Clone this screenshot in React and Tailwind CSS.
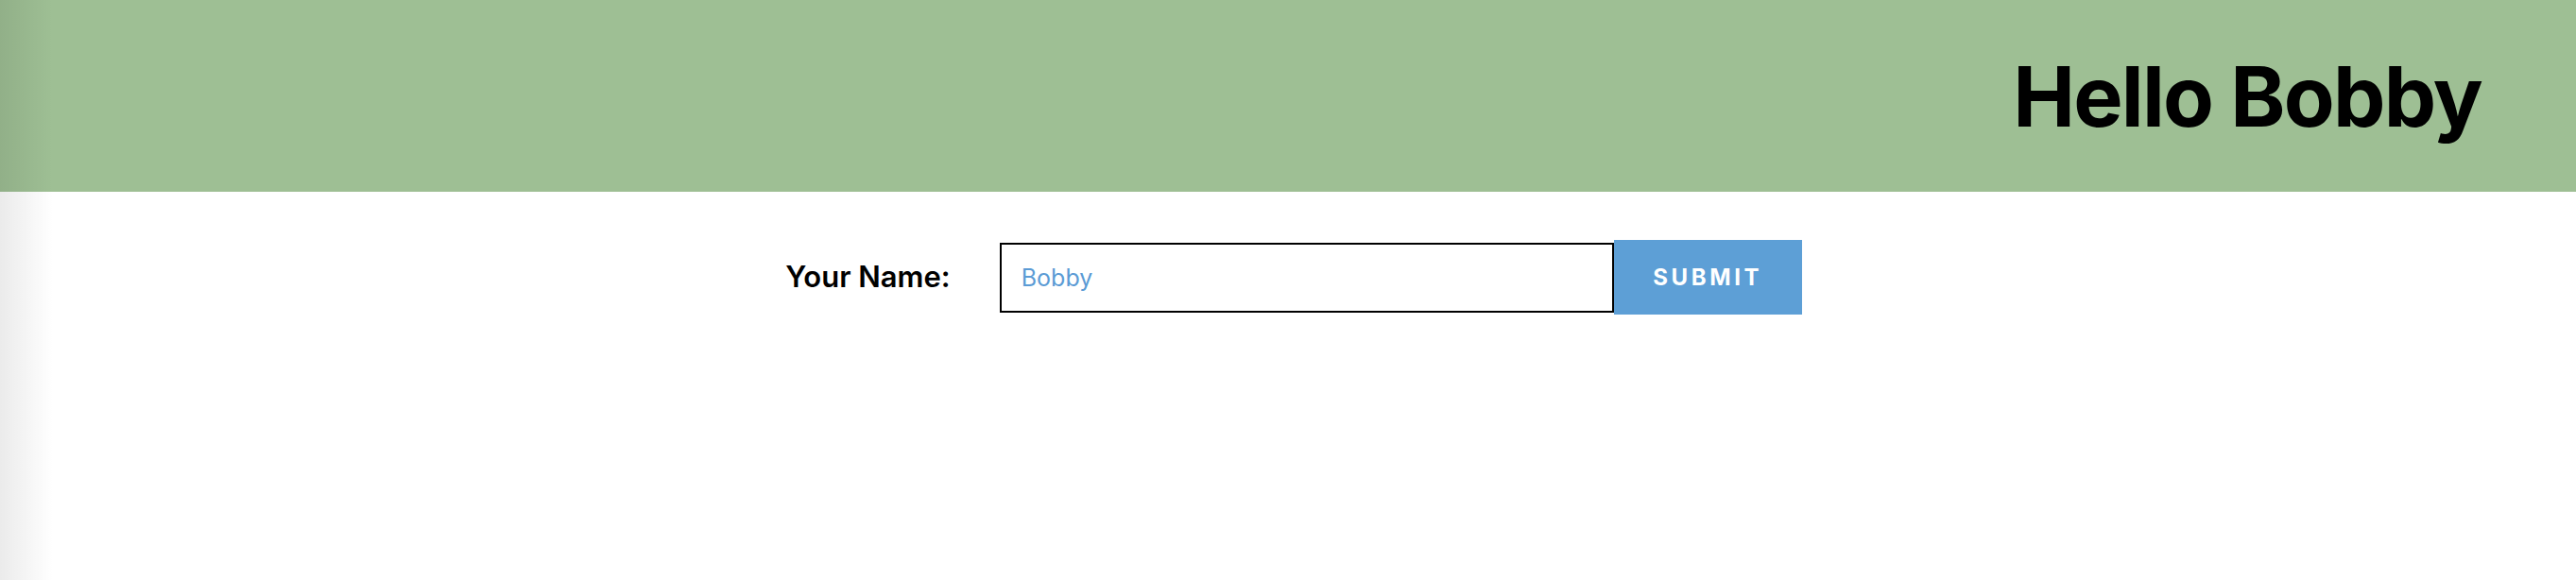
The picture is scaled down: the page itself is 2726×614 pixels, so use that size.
import React, { useState } from 'react';

const App = () => {
  const [name, setName] = useState('Bobby');
  const [greeting, setGreeting] = useState('Bobby');

  const handleSubmit = (e) => {
    e.preventDefault();
    setGreeting(name);
  };

  return (
    <div className="relative min-h-[614px] bg-white font-['Inter','Liberation_Sans',sans-serif] text-black">
      <header className="flex h-[203px] items-center justify-end bg-[#9ebf94] pr-[100px]">
        <h1 className="text-[88px] font-bold leading-none tracking-[-0.02em]">Hello {greeting}</h1>
      </header>

      <form onSubmit={handleSubmit} className="mt-[51px] flex items-center justify-center pl-[12px]">
        <label htmlFor="name" className="mr-[52px] text-[31px] font-semibold">
          Your Name:
        </label>
        <input
          id="name"
          value={name}
          onChange={(e) => setName(e.target.value)}
          className="h-[74px] w-[650px] border-2 border-black px-[21px] text-[25px] text-[#5b9bd5] outline-none"
        />
        <button
          type="submit"
          className="h-[79px] w-[199px] bg-[#5d9fd6] text-[24px] font-bold tracking-[0.15em] text-white"
        >
          SUBMIT
        </button>
      </form>

      {/* soft shadow along the left edge */}
      <div className="pointer-events-none absolute inset-y-0 left-0 w-[56px] bg-gradient-to-r from-black/[0.08] to-transparent" />
    </div>
  );
};

export default App;
